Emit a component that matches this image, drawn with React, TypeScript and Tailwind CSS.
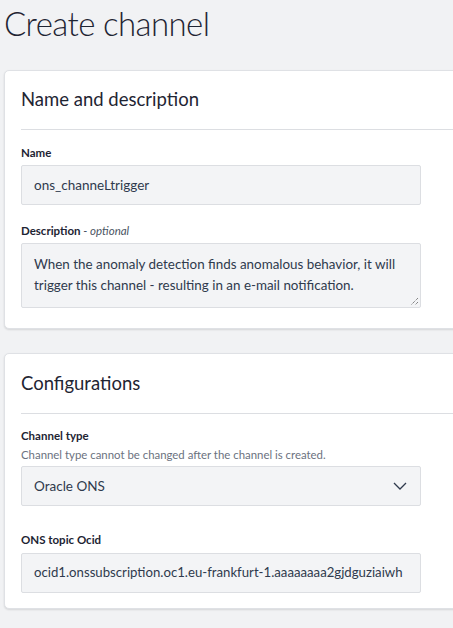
import React from "react";

const font = { fontFamily: "Lato, 'Noto Sans', sans-serif" };

function Label({ children }: { children: React.ReactNode }) {
  return <div className="text-[11.5px] leading-[16px] font-bold text-[#1d2433]">{children}</div>;
}

export default function App() {
  return (
    <div className="min-h-screen w-full overflow-hidden bg-[#f1f2f4] text-[#1d2433]" style={font}>
      <div className="pl-[4px] pt-[4px]">
        <h1 className="text-[33px] leading-[38px] font-light text-[#1f2533] tracking-[-0.6px]">Create channel</h1>
        <div className="mt-[28px] w-[480px] rounded-[5px] border border-[#dfe1e5] bg-white px-[16px] pb-[20px] shadow-[0_1px_2px_rgba(0,0,0,0.12)]">
          <div className="flex h-[59px] items-center border-b border-[#dcdee2] text-[18.5px] text-[#1f2533]">Name and description</div>
          <div className="mt-[15px]"><Label>Name</Label></div>
          <div className="mt-[4px] flex h-[40px] w-[400px] items-center rounded-[2px] border border-[#dcdee2] bg-[#f3f4f6] px-[12px] text-[13.5px] text-[#2f3a4d]">ons_channeLtrigger</div>
          <div className="mt-[18px]"><Label>Description <span className="font-normal italic text-[#4b5563]">- optional</span></Label></div>
          <div className="relative mt-[4px] h-[65px] w-[400px] rounded-[2px] border border-[#dcdee2] bg-[#f3f4f6] px-[12px] pt-[10px] text-[13.4px] leading-[21px] text-[#2f3a4d]">
            When the anomaly detection finds anomalous behavior, it will trigger this channel - resulting in an e-mail notification.
            <svg className="absolute bottom-[1px] right-[1px]" width="9" height="9" viewBox="0 0 9 9">
              <path d="M8 1 L1 8 M8 5 L5 8" stroke="#555" strokeWidth="1" strokeDasharray="1 1" />
            </svg>
          </div>
        </div>
        <div className="mt-[24px] w-[480px] rounded-[5px] border border-[#dfe1e5] bg-white px-[16px] pb-[15px] shadow-[0_1px_2px_rgba(0,0,0,0.12)]">
          <div className="flex h-[60px] items-center border-b border-[#dcdee2] text-[18.5px] text-[#1f2533]">Configurations</div>
          <div className="mt-[14px]"><Label>Channel type</Label></div>
          <div className="mt-[3px] text-[11.4px] leading-[16px] text-[#6b7280]">Channel type cannot be changed after the channel is created.</div>
          <div className="mt-[3px] flex h-[40px] w-[400px] items-center justify-between rounded-[2px] border border-[#dcdee2] bg-[#f3f4f6] px-[12px] text-[13.5px] text-[#2f3a4d]">
            <span>Oracle ONS</span>
            <svg width="14" height="8" viewBox="0 0 14 8" className="mr-[1px]">
              <path d="M1 1 L7 7 L13 1" fill="none" stroke="#2f3a4d" strokeWidth="1.3" />
            </svg>
          </div>
          <div className="mt-[26px]"><Label>ONS topic Ocid</Label></div>
          <div className="mt-[5px] flex h-[40px] w-[400px] items-center overflow-hidden whitespace-nowrap rounded-[2px] border border-[#dcdee2] bg-[#f3f4f6] px-[12px] text-[13.2px] text-[#2f3a4d]">
            ocid1.onssubscription.oc1.eu-frankfurt-1.aaaaaaaa2gjdguziaiwh
          </div>
        </div>
      </div>
    </div>
  );
}
